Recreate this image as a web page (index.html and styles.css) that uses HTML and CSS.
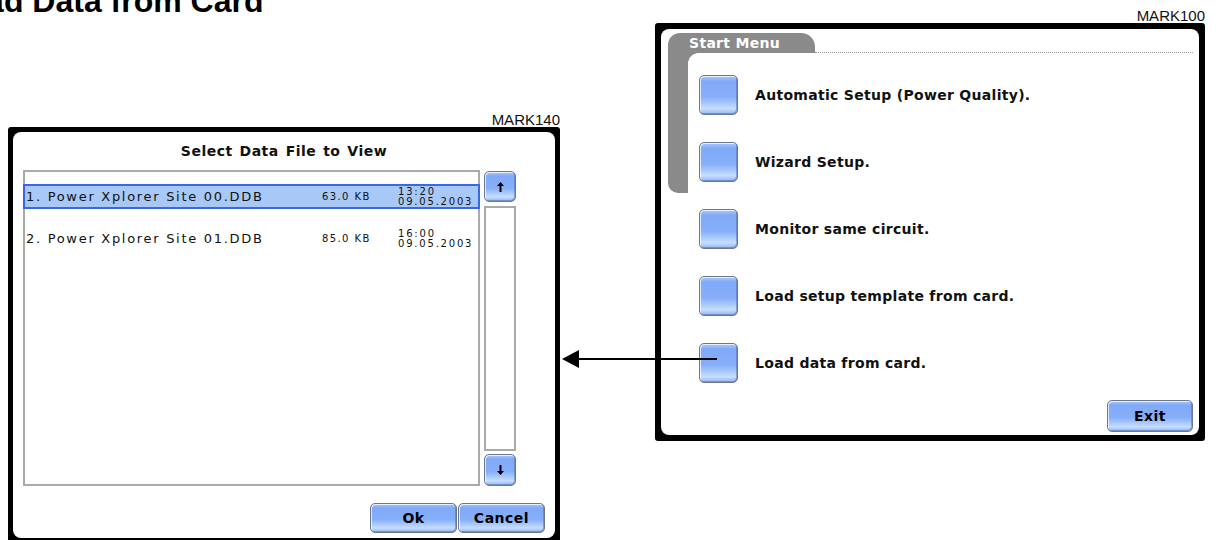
FILE: index.html
```html
<!DOCTYPE html>
<html>
	<head>
		<meta charset="UTF-8">
		<title>Load Data from Card</title>
		<link rel="stylesheet" href="styles.css">
	</head>
	<body>
		<div class="page">
			<div class="col-left">
				<h1 class="doc-title">Load Data from Card</h1>
				<div class="mark">MARK140</div>
				<div class="screen screen-files">
					<div class="lcd">
						<h4 class="lcd-title">Select Data File to View</h4>
						<div class="files">
							<ul class="file-list">
								<li class="active">
									<span class="f-name">1. Power Xplorer Site 00.DDB</span>
									<span class="f-size">63.0 KB</span>
									<span class="f-date">13:20<br>09.05.2003</span>
								</li>
								<li>
									<span class="f-name">2. Power Xplorer Site 01.DDB</span>
									<span class="f-size">85.0 KB</span>
									<span class="f-date">16:00<br>09.05.2003</span>
								</li>
							</ul>
							<div class="scroll">
								<a href="#" class="key key-up">
									<svg width="7" height="10" viewBox="0 0 7 10"><path d="M3.5 0 L7 4 H4.5 V10 H2.5 V4 H0 Z" fill="#000"/></svg>
								</a>
								<div class="track"></div>
								<a href="#" class="key key-down">
									<svg width="7" height="10" viewBox="0 0 7 10"><path d="M3.5 10 L7 6 H4.5 V0 H2.5 V6 H0 Z" fill="#000"/></svg>
								</a>
							</div>
						</div>
						<div class="actions">
							<a href="#" class="key key-text">Ok</a>
							<a href="#" class="key key-text">Cancel</a>
						</div>
					</div>
				</div>
			</div>
			<div class="col-right">
				<div class="mark">MARK100</div>
				<div class="screen screen-menu">
					<div class="lcd">
						<div class="menu-head">
							<span class="tab">Start Menu</span>
							<span class="rule"></span>
						</div>
						<div class="menu-body">
							<div class="rail"></div>
							<ul class="menu">
								<li><a href="#" class="key key-sq"></a>Automatic Setup (Power Quality).</li>
								<li><a href="#" class="key key-sq"></a>Wizard Setup.</li>
								<li><a href="#" class="key key-sq"></a>Monitor same circuit.</li>
								<li><a href="#" class="key key-sq"></a>Load setup template from card.</li>
								<li><a href="#" class="key key-sq"></a>Load data from card.</li>
							</ul>
						</div>
						<div class="actions">
							<a href="#" class="key key-text key-exit">Exit</a>
						</div>
					</div>
				</div>
			</div>
			<!-- pointer from "Load data from card." to the file dialog -->
			<svg class="arrow" width="1224" height="540">
				<line x1="577" y1="359" x2="717" y2="359" stroke="#000" stroke-width="2"/>
				<polygon points="562,359 579,350 579,368" fill="#000"/>
			</svg>
		</div>
	</body>
</html>
```

FILE: styles.css
```css
body{
	margin: 0;
	background: #fff;
}
.page{
	position: relative;
	width: 1224px;
	height: 540px;
	overflow: hidden;
	display: flex;
	align-items: flex-start;
}
.col-left{
	margin-left: 8px;
	width: 552px;
	flex: none;
}
.col-right{
	margin-left: 95px;
	width: 550px;
	flex: none;
}
.doc-title{
	margin: -15px 0 0 -61px;
	height: 32px;
	font: bold 32px/32px "Liberation Sans", Arial, sans-serif;
	color: #000;
	white-space: nowrap;
}
.mark{
	font: 15px/15px "Liberation Sans", Arial, sans-serif;
	color: #111;
	text-align: right;
}
.col-left .mark{margin-top: 95px;}
.col-right .mark{margin-top: 8px;}

/* black instrument frame */
.screen{
	background: #000;
	padding: 5px;
	border-radius: 3px;
	box-sizing: border-box;
}
.screen-files{height: 416px;}
.screen-menu{
	padding: 6px;
	height: 418px;
}
.lcd{
	height: 100%;
	background: #fff;
	border-radius: 8px;
	box-sizing: border-box;
	display: flex;
	flex-direction: column;
	font-family: "DejaVu Sans", sans-serif;
	color: #111;
}

/* blue glossy keys */
.key{
	display: flex;
	align-items: center;
	justify-content: center;
	box-sizing: border-box;
	border: 1px solid #6e778c;
	border-radius: 5px;
	background: linear-gradient(180deg, #aac8fc 0, #80aaf8 14%, #86aef9 55%, #abcbff 74%, #c8deff 86%, #90b4f6 100%);
	box-shadow: inset 1px 1px 0 rgba(255,255,255,.75), inset -1px -1px 0 rgba(70,95,160,.45);
	color: #000;
	text-decoration: none;
}
.key-text{
	font: bold 14px "DejaVu Sans", sans-serif;
	letter-spacing: .5px;
}

/* file dialog */
.screen-files .lcd{padding: 0 10px;}
.lcd-title{
	margin: 0;
	height: 38px;
	font: bold 14px/38px "DejaVu Sans", sans-serif;
	letter-spacing: .5px;
	word-spacing: 1.5px;
	text-align: center;
	color: #111;
}
.files{
	display: flex;
	gap: 4px;
	height: 316px;
}
.file-list{
	list-style: none;
	margin: 0;
	padding: 12px 0 0;
	width: 457px;
	box-sizing: border-box;
	border: 2px solid #aaa;
}
.file-list li{
	display: flex;
	align-items: center;
	height: 25px;
	box-sizing: border-box;
	margin: 0 -2px 17px;
	padding-left: 1px;
	border: 2px solid transparent;
	white-space: nowrap;
}
.file-list li.active{
	background: #a8c8f7;
	border-color: #3a66ee;
}
.f-name{
	width: 296px;
	font-size: 13px;
	letter-spacing: 1.7px;
}
.f-size{
	width: 76px;
	font-size: 10px;
	letter-spacing: 1.4px;
}
.f-date{
	font-size: 10px;
	line-height: 10px;
	letter-spacing: 1.8px;
}
.scroll{
	width: 32px;
	padding-top: 1px;
	display: flex;
	flex-direction: column;
}
.key-up{height: 31px;}
.track{
	height: 245px;
	margin: 4px 0 3px;
	box-sizing: border-box;
	border: 2px solid #aaa;
}
.key-down{height: 32px;}
.actions{
	display: flex;
	justify-content: flex-end;
	gap: 1px;
	margin-top: 17px;
}
.screen-files .key-text{
	width: 87px;
	height: 30px;
}

/* start menu */
.screen-menu .lcd{padding: 4px 6px 0 7px;}
.menu-head{
	display: flex;
	height: 20px;
}
.tab{
	width: 147px;
	box-sizing: border-box;
	padding-left: 21px;
	background: #8a8a8a;
	border-radius: 12px 14px 0 0;
	color: #fff;
	font: bold 14px/20px "DejaVu Sans", sans-serif;
	letter-spacing: .3px;
}
.rule{
	flex: 1;
	border-bottom: 1px dotted #9a9a9a;
}
.menu-body{
	display: flex;
	align-items: flex-start;
	height: 330px;
}
.rail{
	position: relative;
	width: 20px;
	height: 140px;
	flex: none;
	background: #8a8a8a;
	border-bottom-left-radius: 10px;
}
.rail::after{
	content: "";
	position: absolute;
	left: 20px;
	top: 0;
	width: 10px;
	height: 10px;
	background: radial-gradient(circle at 100% 100%, transparent 9.5px, #8a8a8a 10px);
}
.menu{
	list-style: none;
	margin: 0 0 0 11px;
	padding: 22px 0 0;
	display: flex;
	flex-direction: column;
	gap: 27px;
}
.menu li{
	display: flex;
	align-items: center;
	gap: 17px;
	font: bold 14px "DejaVu Sans", sans-serif;
	letter-spacing: .3px;
	white-space: nowrap;
	color: #111;
}
.key-sq{
	width: 39px;
	height: 40px;
	flex: none;
}
.screen-menu .actions{margin-top: 17px;}
.key-exit{
	width: 86px;
	height: 32px;
}

.arrow{
	position: absolute;
	left: 0;
	top: 0;
	pointer-events: none;
}
```
